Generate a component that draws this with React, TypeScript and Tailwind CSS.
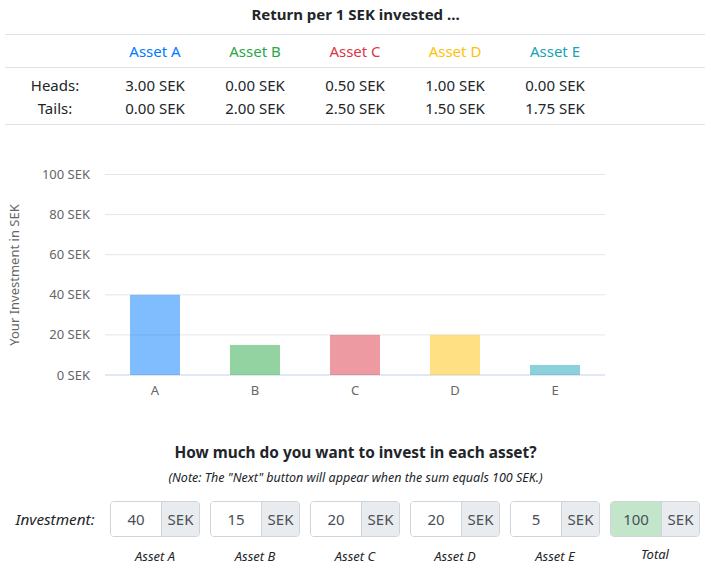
import React from 'react';

const ASSETS = [
  { key: 'A', name: 'Asset A', text: 'text-[#007bff]', fill: 'rgba(0,123,255,0.5)', heads: '3.00 SEK', tails: '0.00 SEK', amount: 40 },
  { key: 'B', name: 'Asset B', text: 'text-[#28a745]', fill: 'rgba(40,167,69,0.5)', heads: '0.00 SEK', tails: '2.00 SEK', amount: 15 },
  { key: 'C', name: 'Asset C', text: 'text-[#dc3545]', fill: 'rgba(220,53,69,0.5)', heads: '0.50 SEK', tails: '2.50 SEK', amount: 20 },
  { key: 'D', name: 'Asset D', text: 'text-[#ffc107]', fill: 'rgba(255,193,7,0.5)', heads: '1.00 SEK', tails: '1.50 SEK', amount: 20 },
  { key: 'E', name: 'Asset E', text: 'text-[#17a2b8]', fill: 'rgba(23,162,184,0.5)', heads: '0.00 SEK', tails: '1.75 SEK', amount: 5 },
];

function Chart() {
  const ticks = [100, 80, 60, 40, 20, 0];
  const y0 = 250;
  const scale = 2.005;
  return (
    <svg width={711} height={280} className="block" style={{ fontFamily: '"Noto Sans", sans-serif' }}>
      {ticks.map((t) => {
        const y = y0 - t * scale;
        return (
          <g key={t}>
            <line x1={105} x2={605} y1={y} y2={y} stroke={t === 0 ? '#c6d2e6' : '#e5e5e5'} strokeWidth={1} />
            <text x={90} y={y + 4.5} textAnchor="end" fontSize={13} fill="#666">
              {t} SEK
            </text>
          </g>
        );
      })}
      {ASSETS.map((a, i) => {
        const h = a.amount * scale;
        const cx = 155 + i * 100;
        return (
          <g key={a.key}>
            <rect x={cx - 25} y={y0 - h} width={50} height={h} fill={a.fill} />
            <text x={cx} y={y0 + 20} textAnchor="middle" fontSize={13} fill="#666">
              {a.key}
            </text>
          </g>
        );
      })}
      <text x={19} y={150} transform="rotate(-90 19 150)" textAnchor="middle" fontSize={13} fill="#666">
        Your Investment in SEK
      </text>
    </svg>
  );
}

function InputGroup({ value, total }: { value: number; total?: boolean }) {
  return (
    <div className="flex h-[36px] overflow-hidden rounded-[4px] border border-[#ced4da]">
      <div className={`flex w-[50px] items-center justify-center text-[15px] text-[#495057] ${total ? 'bg-[#c3e6cb]' : 'bg-white'}`}>
        {value}
      </div>
      <div className="flex flex-1 items-center justify-center border-l border-[#ced4da] bg-[#e9ecef] text-[15px] text-[#495057]">
        SEK
      </div>
    </div>
  );
}

export default function App() {
  const total = ASSETS.reduce((s, a) => s + a.amount, 0);
  return (
    <div className="w-[711px] h-[570px] bg-white text-[#212529]" style={{ fontFamily: '"Noto Sans", sans-serif' }}>
      <div className="flex h-[34px] items-center justify-center pb-[6px] text-[15px] font-bold">Return per 1 SEK invested ...</div>

      <div className="mx-[5px] w-[700px] border-t border-[#dee2e6] text-[15px]">
        <div className="grid h-[33px] grid-cols-7 items-center border-b border-[#dee2e6]">
          <div />
          {ASSETS.map((a) => (
            <div key={a.key} className={`text-center ${a.text}`}>{a.name}</div>
          ))}
          <div />
        </div>
        <div className="border-b border-[#dee2e6] pb-[4px] pt-[6px]">
          <div className="grid h-[23px] grid-cols-7 items-center">
            <div className="text-center">Heads:</div>
            {ASSETS.map((a) => (
              <div key={a.key} className="text-center">{a.heads}</div>
            ))}
          </div>
          <div className="grid h-[23px] grid-cols-7 items-center">
            <div className="text-center">Tails:</div>
            {ASSETS.map((a) => (
              <div key={a.key} className="text-center">{a.tails}</div>
            ))}
          </div>
        </div>
      </div>

      <Chart />

      <div className="mt-[37px] text-center text-[15.4px] font-bold leading-[22px]">How much do you want to invest in each asset?</div>
      <div className="mt-[5px] text-center text-[12.5px] italic leading-[18px]">(Note: The "Next" button will appear when the sum equals 100 SEK.)</div>

      <div className="mx-[5px] mt-[14px] grid w-[700px] grid-cols-7 items-center">
        <div className="text-center text-[15.3px] italic">Investment:</div>
        {ASSETS.map((a) => (
          <div key={a.key} className="px-[5px]">
            <InputGroup value={a.amount} />
          </div>
        ))}
        <div className="px-[5px]">
          <InputGroup value={total} total />
        </div>
      </div>
      <div className="mx-[5px] mt-[10px] grid w-[700px] grid-cols-7 text-[13px] italic leading-[18px]">
        <div />
        {ASSETS.map((a) => (
          <div key={a.key} className="text-center">{a.name}</div>
        ))}
        <div className="-mt-[2px] text-center">Total</div>
      </div>
    </div>
  );
}
